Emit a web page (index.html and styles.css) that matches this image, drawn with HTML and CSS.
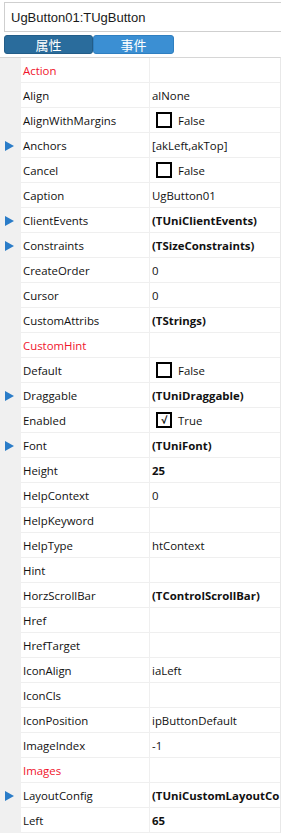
FILE: index.html
```html
<!DOCTYPE html>
<html lang="zh">
<head>
  <meta charset="UTF-8" />
  <title>Object Inspector</title>
  <link rel="stylesheet" href="styles.css">
</head>
<body>
  <div class="title-box">UgButton01:TUgButton</div>

  <div class="tabs">
    <span class="tab tab-active">属性</span>
    <span class="tab">事件</span>
  </div>

  <div class="grid">
    <div class="row"><div class="gutter"></div><div class="name red">Action</div><div class="value"></div></div>
    <div class="row"><div class="gutter"></div><div class="name">Align</div><div class="value">alNone</div></div>
    <div class="row"><div class="gutter"></div><div class="name">AlignWithMargins</div><div class="value"><span class="check"></span>False</div></div>
    <div class="row"><div class="gutter"><span class="arrow"></span></div><div class="name">Anchors</div><div class="value">[akLeft,akTop]</div></div>
    <div class="row"><div class="gutter"></div><div class="name">Cancel</div><div class="value"><span class="check"></span>False</div></div>
    <div class="row"><div class="gutter"></div><div class="name">Caption</div><div class="value">UgButton01</div></div>
    <div class="row"><div class="gutter"><span class="arrow"></span></div><div class="name">ClientEvents</div><div class="value bold">(TUniClientEvents)</div></div>
    <div class="row"><div class="gutter"><span class="arrow"></span></div><div class="name">Constraints</div><div class="value bold">(TSizeConstraints)</div></div>
    <div class="row"><div class="gutter"></div><div class="name">CreateOrder</div><div class="value">0</div></div>
    <div class="row"><div class="gutter"></div><div class="name">Cursor</div><div class="value">0</div></div>
    <div class="row"><div class="gutter"></div><div class="name">CustomAttribs</div><div class="value bold">(TStrings)</div></div>
    <div class="row"><div class="gutter"></div><div class="name red">CustomHint</div><div class="value"></div></div>
    <div class="row"><div class="gutter"></div><div class="name">Default</div><div class="value"><span class="check"></span>False</div></div>
    <div class="row"><div class="gutter"><span class="arrow"></span></div><div class="name">Draggable</div><div class="value bold">(TUniDraggable)</div></div>
    <div class="row"><div class="gutter"></div><div class="name">Enabled</div><div class="value"><span class="check checked">&#8730;</span>True</div></div>
    <div class="row"><div class="gutter"><span class="arrow"></span></div><div class="name">Font</div><div class="value bold">(TUniFont)</div></div>
    <div class="row"><div class="gutter"></div><div class="name">Height</div><div class="value bold">25</div></div>
    <div class="row"><div class="gutter"></div><div class="name">HelpContext</div><div class="value">0</div></div>
    <div class="row"><div class="gutter"></div><div class="name">HelpKeyword</div><div class="value"></div></div>
    <div class="row"><div class="gutter"></div><div class="name">HelpType</div><div class="value">htContext</div></div>
    <div class="row"><div class="gutter"></div><div class="name">Hint</div><div class="value"></div></div>
    <div class="row"><div class="gutter"></div><div class="name">HorzScrollBar</div><div class="value bold">(TControlScrollBar)</div></div>
    <div class="row"><div class="gutter"></div><div class="name">Href</div><div class="value"></div></div>
    <div class="row"><div class="gutter"></div><div class="name">HrefTarget</div><div class="value"></div></div>
    <div class="row"><div class="gutter"></div><div class="name">IconAlign</div><div class="value">iaLeft</div></div>
    <div class="row"><div class="gutter"></div><div class="name">IconCls</div><div class="value"></div></div>
    <div class="row"><div class="gutter"></div><div class="name">IconPosition</div><div class="value">ipButtonDefault</div></div>
    <div class="row"><div class="gutter"></div><div class="name">ImageIndex</div><div class="value">-1</div></div>
    <div class="row"><div class="gutter"></div><div class="name red">Images</div><div class="value"></div></div>
    <div class="row"><div class="gutter"><span class="arrow"></span></div><div class="name">LayoutConfig</div><div class="value bold">(TUniCustomLayoutCo</div></div>
    <div class="row"><div class="gutter"></div><div class="name">Left</div><div class="value bold">65</div></div>
  </div>
</body>
</html>
```

FILE: styles.css
```css
body {
  margin: 0;
  padding: 0;
  background-color: white;
  font-family: 'Open Sans', 'Noto Sans CJK SC', sans-serif;
  font-size: 11.4px;
  color: #111;
  overflow: hidden;
}

.title-box {
  margin: 2px -10px 0 4px;
  height: 28px;
  border: 1px solid #cfcfcf;
  padding-left: 6px;
  display: flex;
  align-items: center;
  font-family: 'Liberation Sans', 'Noto Sans CJK SC', sans-serif;
  font-size: 13px;
  color: #1a1a1a;
}

.tabs {
  display: flex;
  margin: 3px 0 0 4px;
  height: 19px;
}

.tab {
  width: 79px;
  display: flex;
  align-items: center;
  justify-content: center;
  background-color: #3b8fd3;
  border: 1px solid #2f7fc0;
  border-radius: 3px;
  color: white;
  font-family: 'Noto Sans CJK SC', sans-serif;
  font-size: 13px;
}

.tab-active {
  width: 87px;
  background-color: #2a6c9c;
  border-color: #235d88;
}

.grid {
  margin-top: 3px;
  border-top: 1px solid #d6d6d6;
  width: 280px;
  border-right: 1px solid #e8e8e8;
}

.row {
  display: flex;
  height: 25px;
}

.gutter {
  width: 21px;
  background-color: #f0f0f0;
  display: flex;
  align-items: center;
  padding-left: 5px;
  box-sizing: border-box;
}

.arrow {
  width: 0;
  height: 0;
  border-top: 5px solid transparent;
  border-bottom: 5px solid transparent;
  border-left: 9px solid #2a7cc8;
}

.name {
  width: 129px;
  padding-left: 2px;
  box-sizing: border-box;
  border-right: 1px solid #efefef;
  border-bottom: 1px solid #efefef;
  display: flex;
  align-items: center;
}

.value {
  flex: 1;
  padding-left: 2px;
  border-bottom: 1px solid #efefef;
  display: flex;
  align-items: center;
  white-space: nowrap;
  overflow: hidden;
}

.red {
  color: #f0142c;
}

.bold {
  font-weight: bold;
}

.check {
  width: 12px;
  height: 12px;
  border: 2px solid #000;
  margin: 0 6px 0 4px;
  display: inline-flex;
  align-items: center;
  justify-content: center;
  font-size: 10px;
  font-weight: bold;
  line-height: 1;
}
```
